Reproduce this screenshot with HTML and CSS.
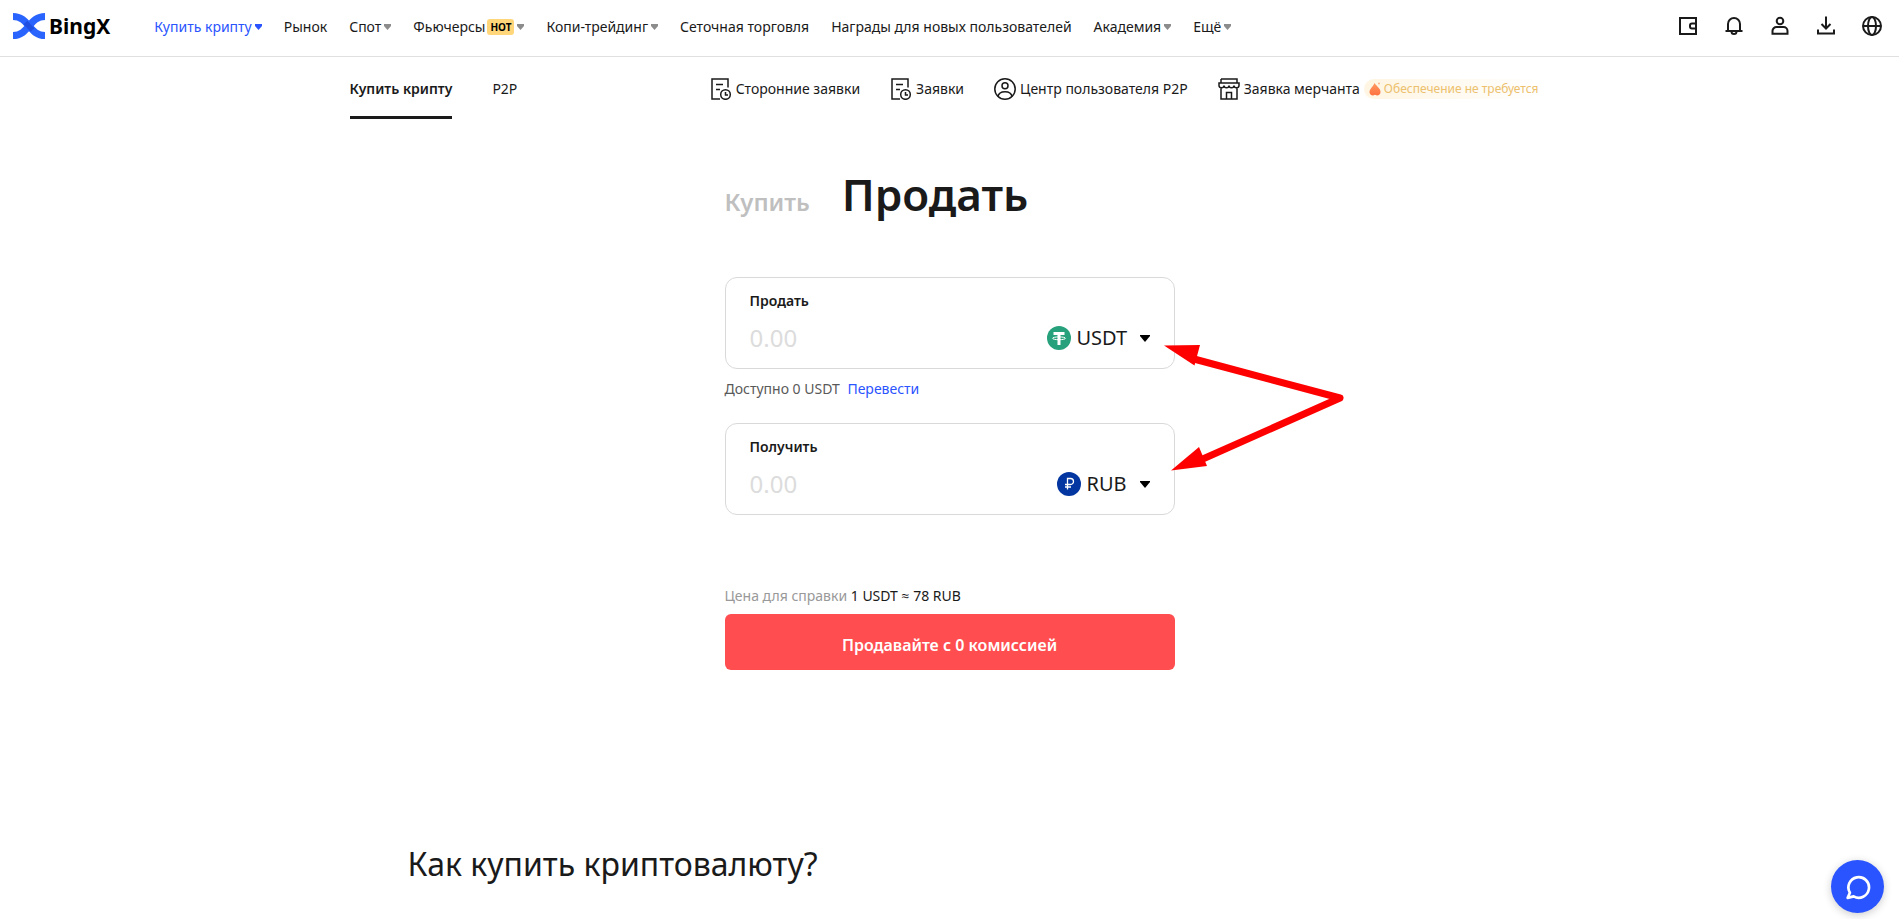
FILE: index.html
```html
<!DOCTYPE html>
<html lang="ru">
<head>
<meta charset="utf-8">
<title>BingX — Купить крипту</title>
<meta name="viewport" content="width=device-width, initial-scale=1">
<link rel="stylesheet" href="styles.css">
</head>
<body>
<header class="header">
  <a class="logo" href="#">
    <svg class="logo-mark" viewBox="0 0 32 26" fill="none" stroke="#2a64ff" stroke-width="7" aria-hidden="true">
      <path d="M0 22.500C16 22.500 16 3.500 32 3.500"/>
      <path d="M0 3.500C16 3.500 16 22.500 32 22.500"/>
      <path d="M12.500 9.500C14.500 11.700 17.500 15 19.500 17" stroke="#1e4fe0" stroke-width="5"/>
    </svg>
    <span class="logo-text">BingX</span>
  </a>
  <nav class="nav">
    <a class="nav-link active" href="#">Купить крипту<svg class="caret" viewBox="0 0 7 6"><path d="M0 0h7v2L3.500 6 0 2z"/></svg></a>
    <a class="nav-link" href="#">Рынок</a>
    <a class="nav-link" href="#">Спот<svg class="caret" viewBox="0 0 7 6"><path d="M0 0h7v2L3.500 6 0 2z"/></svg></a>
    <a class="nav-link" href="#">Фьючерсы<span class="hot">HOT</span><svg class="caret" viewBox="0 0 7 6"><path d="M0 0h7v2L3.500 6 0 2z"/></svg></a>
    <a class="nav-link" href="#">Копи-трейдинг<svg class="caret" viewBox="0 0 7 6"><path d="M0 0h7v2L3.500 6 0 2z"/></svg></a>
    <a class="nav-link" href="#">Сеточная торговля</a>
    <a class="nav-link" href="#">Награды для новых пользователей</a>
    <a class="nav-link" href="#">Академия<svg class="caret" viewBox="0 0 7 6"><path d="M0 0h7v2L3.500 6 0 2z"/></svg></a>
    <a class="nav-link" href="#">Ещё<svg class="caret" viewBox="0 0 7 6"><path d="M0 0h7v2L3.500 6 0 2z"/></svg></a>
  </nav>
  <div class="tools">
    <button class="tool" aria-label="Кошелёк"><svg viewBox="0 0 22 22"><path d="M19 8V3H3v16h16v-5M19.500 8.500H15a2 2 0 0 0-2 2v1a2 2 0 0 0 2 2h4.500M19 8v6"/></svg></button>
    <button class="tool" aria-label="Уведомления"><svg viewBox="0 0 22 22"><path d="M5 16V9a6 6 0 0 1 12 0v7M2.500 16h17M8.500 16.500a2.500 2.500 0 0 0 5 0"/></svg></button>
    <button class="tool" aria-label="Профиль"><svg viewBox="0 0 22 22"><circle cx="11" cy="6" r="3.300"/><path d="M7.500 12h7a4 4 0 0 1 4 4v2.700h-15V16a4 4 0 0 1 4-4z"/></svg></button>
    <button class="tool" aria-label="Загрузить"><svg viewBox="0 0 22 22"><path d="M11 1.500v12M6.500 9l4.500 4.500L15.500 9M3 14.500v4h16v-4"/></svg></button>
    <button class="tool" aria-label="Язык"><svg viewBox="0 0 22 22"><circle cx="11" cy="11" r="9"/><ellipse cx="11" cy="11" rx="4" ry="9"/><path d="M2 11h18"/></svg></button>
  </div>
</header>

<div class="subnav">
  <div class="tabs">
    <a class="tab current" href="#">Купить крипту</a>
    <a class="tab" href="#">P2P</a>
  </div>
  <div class="links">
    <a class="link" href="#"><svg class="link-icon" viewBox="0 0 22 22"><path d="M18 9.500V1H2v20h8M6 6.500h7M6 11.500h4"/><circle cx="15.500" cy="16.500" r="4.800"/><path d="M15.500 14v3H18"/></svg>Сторонние заявки</a>
    <a class="link" href="#"><svg class="link-icon" viewBox="0 0 22 22"><path d="M18 9.500V1H2v20h8M6 6.500h7M6 11.500h4"/><circle cx="15.500" cy="16.500" r="4.800"/><path d="M15.500 14v3H18"/></svg>Заявки</a>
    <a class="link" href="#"><svg class="link-icon" viewBox="0 0 22 22"><circle cx="11" cy="11" r="10.200"/><circle cx="11" cy="7.800" r="3"/><path d="M4 18.500C5 12 17 12 18 18.500"/></svg>Центр пользователя P2P</a>
    <a class="link" href="#"><svg class="link-icon" viewBox="0 0 22 22"><path d="M3 1h16v4M3 1v4M1 5h20v2.500c0 3-5 3-5 0 0 3-5 3-5 0 0 3-5 3-5 0 0 3-5 3-5 0zM3 10v11h16V10M8.500 21v-6.500h5V21"/></svg>Заявка мерчанта<span class="pill"><svg class="flame" viewBox="0 0 12 14"><defs><linearGradient id="fire" x1="0" y1="0" x2="0" y2="1"><stop offset="0" stop-color="#ff9a62"/><stop offset="1" stop-color="#ff703f"/></linearGradient></defs><path fill="url(#fire)" d="M5.500 1C7 4 11.500 6 11.500 10c0 2-1.500 3.500-3.500 3.500L6 12.800l-2 .7C2 13.500.5 12 .5 10 .5 7 4.500 4 5.500 1z"/><circle cx="10" cy="1.500" r="1" fill="#ffb890"/></svg>Обеспечение не требуется</span></a>
  </div>
</div>

<main>
  <form class="trade">
    <div class="modes">
      <button type="button" class="mode">Купить</button>
      <button type="button" class="mode chosen">Продать</button>
    </div>

    <div class="card">
      <label class="card-label" for="sell">Продать</label>
      <div class="card-row">
        <input class="amount" id="sell" type="text" placeholder="0.00">
        <div class="currency">
          <svg class="coin" viewBox="0 0 24 24" fill="none" stroke="#fff" aria-hidden="true"><circle cx="12" cy="12" r="12" fill="#26a17b" stroke="none"/><path d="M6.500 7.500h11M12 7.500V19" stroke-width="3"/><ellipse cx="12" cy="12.300" rx="6.500" ry="1.400"/></svg>
          <select class="select" aria-label="Валюта продажи"><option>USDT</option></select>
          <svg class="arrow" viewBox="0 0 10 7" aria-hidden="true"><path d="M0 0h10v1L5 7 0 1z"/></svg>
        </div>
      </div>
    </div>
    <p class="balance">Доступно 0 USDT <a class="transfer" href="#">Перевести</a></p>

    <div class="card">
      <label class="card-label" for="get">Получить</label>
      <div class="card-row">
        <input class="amount" id="get" type="text" placeholder="0.00">
        <div class="currency">
          <svg class="coin" viewBox="0 0 24 24" fill="none" stroke="#fff" aria-hidden="true"><circle cx="12" cy="12" r="12" fill="#0336a0" stroke="none"/><path d="M10.500 17.500V6.500H13.500a3 3 0 0 1 0 6H8M8 15h6" stroke-width="1.300"/></svg>
          <select class="select" aria-label="Валюта получения"><option>RUB</option></select>
          <svg class="arrow" viewBox="0 0 10 7" aria-hidden="true"><path d="M0 0h10v1L5 7 0 1z"/></svg>
        </div>
      </div>
    </div>

    <p class="price">Цена для справки <span class="rate">1 USDT ≈ 78 RUB</span></p>
    <button type="button" class="submit">Продавайте с 0 комиссией</button>

    <svg class="pointers" viewBox="0 0 184 130" fill="red" aria-hidden="true">
      <path d="M30 14L176 53L32 117" fill="none" stroke="red" stroke-width="7" stroke-linejoin="round"/>
      <path d="M0 0.500L36 0L30.500 20.500z"/>
      <path d="M7 125.500L35 102L43 121z"/>
    </svg>
  </form>

  <section class="guide">
    <h2 class="guide-title">Как купить криптовалюту?</h2>
  </section>
</main>

<button class="chat" aria-label="Чат"><svg viewBox="0 0 24 24"><path d="M4.500 17.300A9.500 9.500 0 1 1 8 20.700L2.500 22z"/></svg></button>
</body>
</html>
```
FILE: styles.css
```css
* {
  box-sizing: border-box;
}

body {
  margin: 0;
  background: #fff;
  color: #1a1a1a;
  font-family: "Noto Sans", "Open Sans", sans-serif;
  font-size: 14px;
  line-height: 20px;
}

a {
  color: inherit;
  text-decoration: none;
}

button,
input,
select {
  padding: 0;
  border: 0;
  background: none;
  color: inherit;
  font: inherit;
}

button {
  cursor: pointer;
}

.header {
  display: flex;
  align-items: center;
  height: 57px;
  padding: 0 16px 4px 13px;
  border-bottom: 1px solid #e0e0e0;
}

.logo {
  display: flex;
  align-items: center;
  gap: 4px;
  margin-right: 44px;
}

.logo-mark {
  width: 32px;
  height: 26px;
}

.logo-text {
  color: #000;
  font-size: 21px;
  font-weight: 700;
}

.nav {
  display: flex;
  gap: 22px;
  padding-top: 2px;
  white-space: nowrap;
}

.nav-link {
  display: flex;
  align-items: center;
}

.active {
  color: #2a54ff;
}

.caret {
  width: 7px;
  height: 6px;
  margin-left: 3px;
  fill: #8c8c8c;
}

.active .caret {
  fill: #2a54ff;
}

.hot {
  margin-left: 2px;
  padding: 0 3px;
  border-radius: 3px;
  background: #ffd67a;
  color: #000;
  font-size: 10px;
  font-weight: 700;
  line-height: 16px;
}

.tools {
  display: flex;
  gap: 24px;
  margin-left: auto;
}

.tool {
  width: 22px;
  height: 22px;
}

.tool svg {
  display: block;
  fill: none;
  stroke: #1a1a1a;
  stroke-width: 2;
}

.subnav {
  display: flex;
  justify-content: space-between;
  max-width: 1200px;
  margin: 0 auto;
  white-space: nowrap;
}

.tabs {
  display: flex;
  gap: 40px;
}

.tab {
  padding: 22px 0 17px;
  border-bottom: 3px solid transparent;
}

.current {
  border-color: #1a1a1a;
  font-weight: 600;
}

.links {
  display: flex;
  align-items: center;
  gap: 30px;
  padding: 2px 8px 0 0;
}

.link {
  display: flex;
  align-items: center;
  gap: 4px;
}

.link-icon {
  width: 22px;
  height: 22px;
  fill: none;
  stroke: #1a1a1a;
  stroke-width: 1.5;
}

.pill {
  display: flex;
  align-items: center;
  gap: 3px;
  padding: 0 3px 0 5px;
  border-radius: 10px;
  background: linear-gradient(90deg, #fff5e2, #fff);
  color: #ecc06c;
  font-size: 12px;
}

.flame {
  width: 12px;
  height: 14px;
}

.trade {
  position: relative;
  width: 450px;
  max-width: 100%;
  margin: 0 auto;
  padding-top: 43px;
}

.modes {
  display: flex;
  align-items: baseline;
  gap: 32px;
  margin-bottom: 43px;
  line-height: 64px;
}

.mode {
  color: #bfbfbf;
  font-size: 24px;
  font-weight: 600;
}

.chosen {
  color: #1a1a1a;
  font-size: 44px;
}

.card {
  padding: 13px 24px 11px;
  border: 1px solid #d9d9d9;
  border-radius: 12px;
}

.card-label {
  font-weight: 600;
}

.card-row {
  display: flex;
  align-items: center;
  justify-content: space-between;
  margin-top: 6px;
}

.amount {
  flex: 1;
  min-width: 0;
  height: 40px;
  font-size: 24px;
  outline: 0;
}

.amount::placeholder {
  color: #dcdcdc;
}

.currency {
  display: flex;
  align-items: center;
  gap: 6px;
  padding-top: 2px;
}

.coin {
  width: 24px;
  height: 24px;
}

.select {
  appearance: none;
  font-size: 20px;
}

.arrow {
  width: 10px;
  height: 7px;
  margin-left: 6px;
}

.balance {
  margin: 10px 0 24px;
  color: #595959;
}

.transfer {
  margin-left: 4px;
  color: #2a54ff;
}

.price {
  margin: 71px 0 8px;
  color: #999;
}

.rate {
  color: #1a1a1a;
}

.submit {
  width: 100%;
  height: 56px;
  padding-top: 6px;
  border-radius: 6px;
  background: #ff4d50;
  color: #fff;
  font-size: 16px;
  font-weight: 600;
}

.pointers {
  position: absolute;
  top: 226px;
  left: 439px;
  width: 184px;
  height: 130px;
  pointer-events: none;
}

.guide {
  max-width: 1084px;
  margin: 0 auto;
  padding: 172px 0 32px;
}

.guide-title {
  margin: 0;
  font-size: 32px;
  font-weight: 400;
  line-height: 44px;
}

.chat {
  display: flex;
  align-items: center;
  justify-content: center;
  position: fixed;
  right: 15px;
  bottom: 6px;
  width: 53px;
  height: 53px;
  border-radius: 50%;
  background: #2a54ff;
  box-shadow: 0 2px 8px rgba(0, 0, 0, 0.2);
}

.chat svg {
  width: 26px;
  height: 26px;
  fill: none;
  stroke: #fff;
  stroke-width: 2.5;
  stroke-linejoin: round;
}
```
